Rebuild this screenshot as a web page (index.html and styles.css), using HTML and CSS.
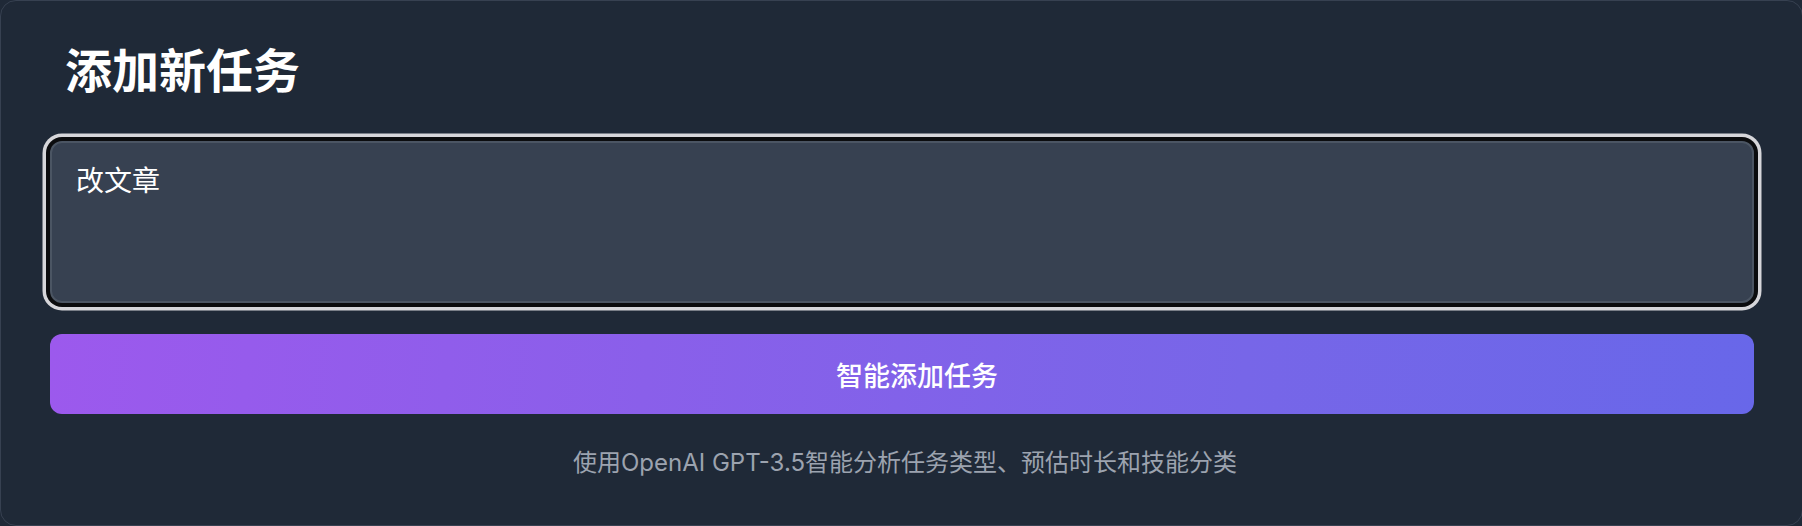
FILE: index.html
```html
<!DOCTYPE html>
<html lang="zh-CN">
<head>
<meta charset="utf-8">
<title>添加新任务</title>
<link rel="stylesheet" href="styles.css">
</head>
<body>
  <section class="card">
    <h2 class="card-title">添加新任务</h2>
    <textarea class="task-input" autofocus>改文章</textarea>
    <button class="submit-btn" type="button"><span class="btn-label">智能添加任务</span></button>
    <p class="hint">使用OpenAI GPT-3.5智能分析任务类型、预估时长和技能分类</p>
  </section>
</body>
</html>
```

FILE: styles.css
```css
* { box-sizing: border-box; }

html, body {
  margin: 0;
  padding: 0;
  background: #1f2937;
}

body {
  font-family: Inter, "Noto Sans CJK SC", "Noto Sans", sans-serif;
  width: 1802px;
  height: 526px;
  overflow: hidden;
}

.card {
  width: 1803px;
  height: 526px;
  background: #1f2937;
  border: 1px solid #374151;
  border-radius: 16px;
  padding: 43px 48px 0 49px;
  display: flex;
  flex-direction: column;
}

.card-title {
  margin: 0 0 43px 0;
  padding-left: 15px;
  font-size: 47px;
  line-height: 54px;
  font-weight: 700;
  color: #ffffff;
}

.task-input {
  display: block;
  width: 100%;
  height: 162px;
  margin: 0;
  padding: 18px 24px;
  background: #374151;
  color: #ffffff;
  border: 2px solid #4b5563;
  border-radius: 12px;
  font-family: inherit;
  font-size: 28px;
  line-height: 40.5px;
  resize: none;
  outline: none;
  box-shadow: 0 0 0 4px #0b0c0e, 0 0 0 7.5px #d6d6da;
}

.submit-btn {
  display: flex;
  align-items: center;
  justify-content: center;
  width: 100%;
  height: 80px;
  margin-top: 31px;
  padding: 0 0 0 30px;
  border: none;
  border-radius: 12px;
  background: linear-gradient(95deg, #9c59ed 0%, #8a5fea 35%, #7766e8 70%, #6867e9 100%);
  color: #ffffff;
  font-family: inherit;
  font-size: 27px;
  font-weight: 500;
  cursor: pointer;
}

.hint {
  margin: 31px 0 0 0;
  padding-left: 6px;
  text-align: center;
  font-size: 24px;
  line-height: 36px;
  color: #9ca3af;
}
```
